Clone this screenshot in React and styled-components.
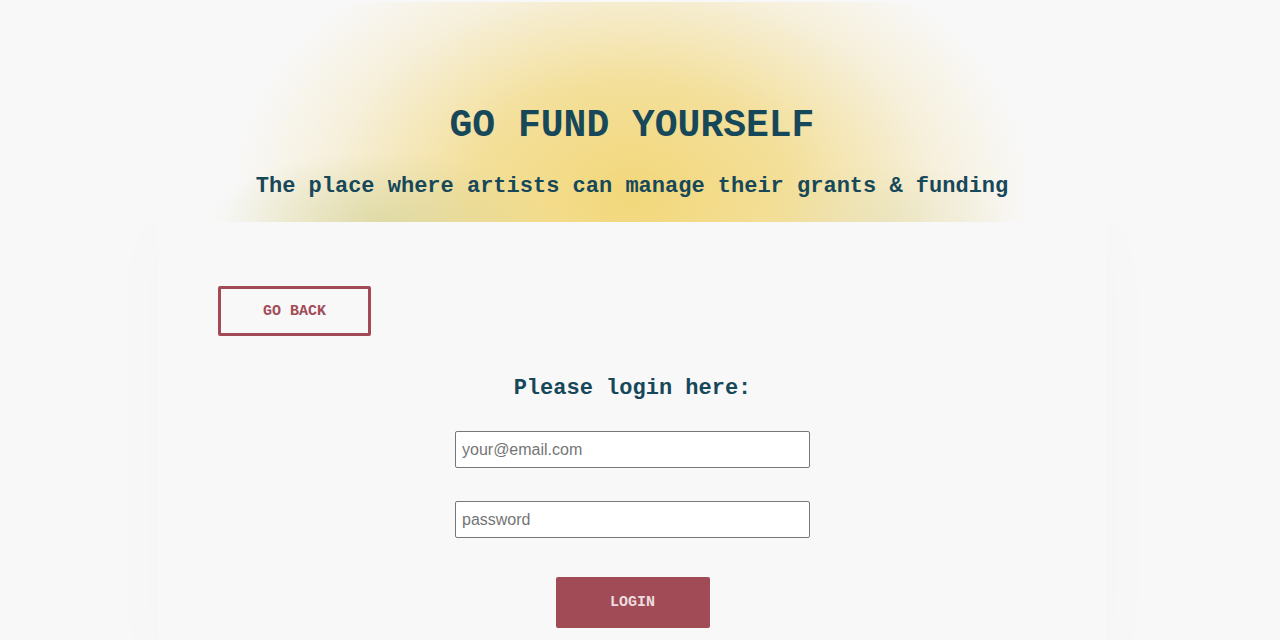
import React from 'react'
import styled, { createGlobalStyle } from 'styled-components'

const GlobalStyle = createGlobalStyle`
  html, body {
    margin: 0;
    background: #f8f8f8;
  }
  * { box-sizing: border-box; }
`;

const LoginPage = () => {
  return (
    <Page>
      <GlobalStyle />
      <Header>
        <Title>GO FUND YOURSELF</Title>
        <Subtitle>The place where artists can manage their grants &amp; funding</Subtitle>
      </Header>
      <Card>
        <BackRow>
          <OutlineButton type="button">GO BACK</OutlineButton>
        </BackRow>
        <Form onSubmit={e => e.preventDefault()}>
          <FormTitle>Please login here:</FormTitle>
          <Input type="email" placeholder="your@email.com" />
          <Input type="password" placeholder="password" />
          <SolidButton type="submit">LOGIN</SolidButton>
        </Form>
      </Card>
    </Page>
  )
}

const Page = styled.div`
  width: 1264px;
  min-height: 640px;
  background: #f8f8f8;
  font-family: "Liberation Mono", "Courier New", monospace;
  overflow: hidden;
`;

const Header = styled.header`
  position: relative;
  z-index: 1;
  height: 220px;
  margin-top: 2px;
  display: flex;
  flex-direction: column;
  align-items: center;
  padding-top: 101px;
  background:
    radial-gradient(ellipse 170px 70px at 30% 100%, rgba(205, 205, 140, 0.55), rgba(205, 205, 140, 0) 100%),
    radial-gradient(ellipse 130px 60px at 70% 100%, rgba(215, 215, 170, 0.35), rgba(215, 215, 170, 0) 100%),
    radial-gradient(ellipse 400px 280px at 50% 88%, #f2d77a 0%, rgba(242, 215, 122, 0.75) 40%, rgba(242, 220, 150, 0.3) 75%, rgba(248, 248, 248, 0) 100%),
    #f8f8f8;
`;

const Title = styled.h1`
  margin: 0;
  font-size: 38px;
  line-height: 46px;
  font-weight: 700;
  color: #17485a;
`;

const Subtitle = styled.h2`
  margin: 24px 0 0;
  font-size: 22px;
  line-height: 28px;
  font-weight: 700;
  color: #17485a;
`;

const Card = styled.main`
  margin: 0 157px 0 158px;
  min-height: 420px;
  background: #f8f8f8;
  box-shadow: 0 0 70px rgba(0, 0, 0, 0.02);
  padding: 64px 60px 40px;
`;

const BackRow = styled.div`
  display: flex;
`;

const OutlineButton = styled.button`
  width: 153px;
  height: 50px;
  background: transparent;
  border: 3px solid #a24b57;
  border-radius: 2px;
  color: #a24b57;
  font-family: "Liberation Mono", "Courier New", monospace;
  font-weight: 700;
  font-size: 15px;
  cursor: pointer;
`;

const Form = styled.form`
  display: flex;
  flex-direction: column;
  align-items: center;
  margin-top: 38px;
`;

const FormTitle = styled.h3`
  margin: 0 0 27px;
  font-size: 22px;
  line-height: 30px;
  font-weight: 700;
  color: #17485a;
`;

const Input = styled.input`
  width: 355px;
  height: 37px;
  margin-bottom: 33px;
  padding: 0 6px;
  background: #fff;
  border: 1px solid #777;
  border-radius: 2px;
  font-family: "Liberation Sans", Arial, sans-serif;
  font-size: 16px;
  color: #333;
  &::placeholder {
    color: #757575;
  }
`;

const SolidButton = styled.button`
  width: 154px;
  height: 51px;
  margin-top: 6px;
  background: #a04b56;
  border: none;
  border-radius: 2px;
  color: #ecdcdf;
  font-family: "Liberation Mono", "Courier New", monospace;
  font-weight: 700;
  font-size: 15px;
  cursor: pointer;
`;

export default LoginPage
